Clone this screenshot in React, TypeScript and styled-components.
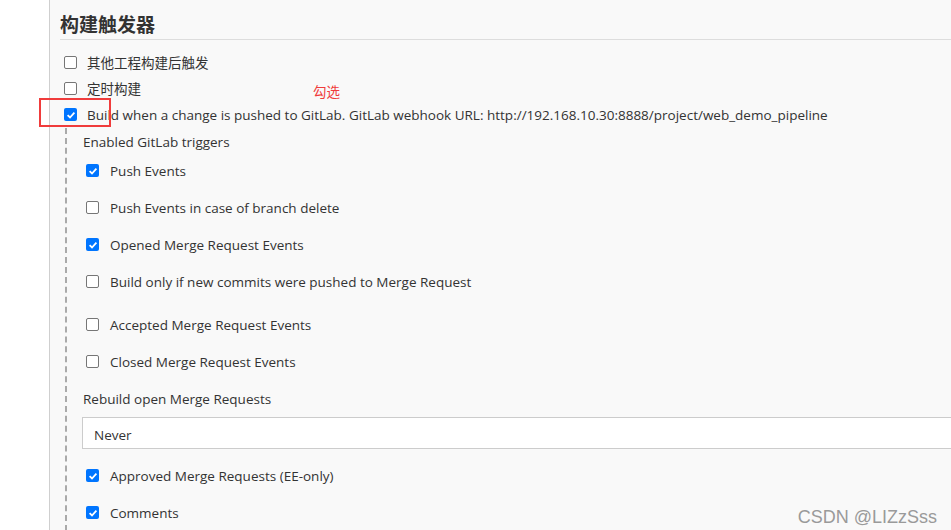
import React from 'react';
import styled, { createGlobalStyle } from 'styled-components';

const GlobalStyle = createGlobalStyle`
  html, body { margin: 0; padding: 0; background: #ffffff; }
  body {
    font-family: 'Open Sans', 'Noto Sans CJK SC', sans-serif;
    color: #333333;
    overflow: hidden;
  }
`;

const Page = styled.div`
  display: flex;
  width: 951px;
  height: 530px;
  overflow: hidden;
`;

const Gutter = styled.div`
  width: 49px;
  flex: none;
  background: #ffffff;
  border-right: 1px solid #cfcfcf;
`;

const Main = styled.div`
  position: relative;
  flex: 1;
  background: #f9f9f9;
  padding-left: 10px;
`;

const Heading = styled.h2`
  margin: 0;
  padding-top: 11px;
  height: 28px;
  font-size: 19px;
  font-weight: 700;
  color: #333333;
  border-bottom: 1px solid #dddddd;
  font-family: 'Noto Sans CJK SC', sans-serif;
  line-height: 26px;
`;

const TopList = styled.div`
  display: flex;
  flex-direction: column;
  padding-top: 9px;
  padding-left: 4px;
`;

const Row = styled.label<{ $h: number; $after?: number }>`
  display: flex;
  align-items: center;
  height: ${p => p.$h}px;
  margin-bottom: ${p => p.$after ?? 0}px;
  font-size: 13.5px;
  white-space: nowrap;
`;

const Box = styled.span<{ $on?: boolean }>`
  box-sizing: border-box;
  width: 13px;
  height: 13px;
  flex: none;
  border-radius: 2px;
  border: ${p => (p.$on ? 'none' : '1px solid #767676')};
  background: ${p => (p.$on ? '#0075ff' : '#ffffff')};
  display: flex;
  align-items: center;
  justify-content: center;
  margin-right: 10px;
`;

const CjkText = styled.span`
  font-family: 'Noto Sans CJK SC', sans-serif;
`;

const Nested = styled.div`
  margin-left: 5px;
  border-left: 2px dashed #aaaaaa;
  padding-left: 16px;
  display: flex;
  flex-direction: column;
`;

const Caption = styled.div<{ $h: number; $top?: number }>`
  box-sizing: border-box;
  height: ${p => p.$h}px;
  padding-top: ${p => p.$top ?? 0}px;
  display: flex;
  align-items: center;
  font-size: 13.5px;
`;

const InnerRow = styled(Row)`
  padding-left: 3px;
  & > span:first-child { margin-right: 11px; }
`;

const Select = styled.div`
  box-sizing: border-box;
  height: 32px;
  background: #ffffff;
  border: 1px solid #cccccc;
  border-right: none;
  display: flex;
  align-items: center;
  padding: 3px 0 0 11px;
  font-size: 13.5px;
  margin-left: -1px;
  margin-bottom: 8px;
`;

const Highlight = styled.div`
  position: absolute;
  left: -11px;
  top: 98px;
  width: 68px;
  height: 25px;
  border: 2px solid #f03c3c;
`;

const Note = styled.div`
  position: absolute;
  left: 263px;
  top: 81px;
  color: #f03c3c;
  font-size: 13.5px;
  font-family: 'Noto Sans CJK SC', sans-serif;
`;

const Watermark = styled.div`
  position: absolute;
  right: 14px;
  bottom: 2px;
  color: #9a9a9a;
  font-size: 18px;
  font-family: 'Liberation Sans', Arial, sans-serif;
`;

function Check({ on }: { on?: boolean }) {
  return (
    <Box $on={on}>
      {on && (
        <svg width="10" height="10" viewBox="0 0 10 10">
          <path d="M1.6 5.2 L4 7.5 L8.4 2.6" fill="none" stroke="#ffffff" strokeWidth="1.8" />
        </svg>
      )}
    </Box>
  );
}

const triggers: { label: string; on: boolean; after?: number }[] = [
  { label: 'Push Events', on: true },
  { label: 'Push Events in case of branch delete', on: false },
  { label: 'Opened Merge Request Events', on: true },
  { label: 'Build only if new commits were pushed to Merge Request', on: false, after: 6 },
  { label: 'Accepted Merge Request Events', on: false },
  { label: 'Closed Merge Request Events', on: false },
];

export default function App() {
  return (
    <>
      <GlobalStyle />
      <Page>
        <Gutter />
        <Main>
          <Heading>构建触发器</Heading>
          <TopList>
            <Row $h={26}>
              <Check />
              <CjkText>其他工程构建后触发</CjkText>
            </Row>
            <Row $h={26}>
              <Check />
              <CjkText>定时构建</CjkText>
            </Row>
            <Row $h={27}>
              <Check on />
              Build when a change is pushed to GitLab. GitLab webhook URL: http://192.168.10.30:8888/project/web_demo_pipeline
            </Row>
          </TopList>
          <Nested>
            <Caption $h={24} $top={4}>Enabled GitLab triggers</Caption>
            {triggers.map(t => (
              <InnerRow key={t.label} $h={37} $after={t.after}>
                <Check on={t.on} />
                {t.label}
              </InnerRow>
            ))}
            <Caption $h={37}>Rebuild open Merge Requests</Caption>
            <Select>Never</Select>
            <InnerRow $h={37}>
              <Check on />
              Approved Merge Requests (EE-only)
            </InnerRow>
            <InnerRow $h={37}>
              <Check on />
              Comments
            </InnerRow>
          </Nested>
          <Highlight />
          <Note>勾选</Note>
          <Watermark>CSDN @LIZzSss</Watermark>
        </Main>
      </Page>
    </>
  );
}
